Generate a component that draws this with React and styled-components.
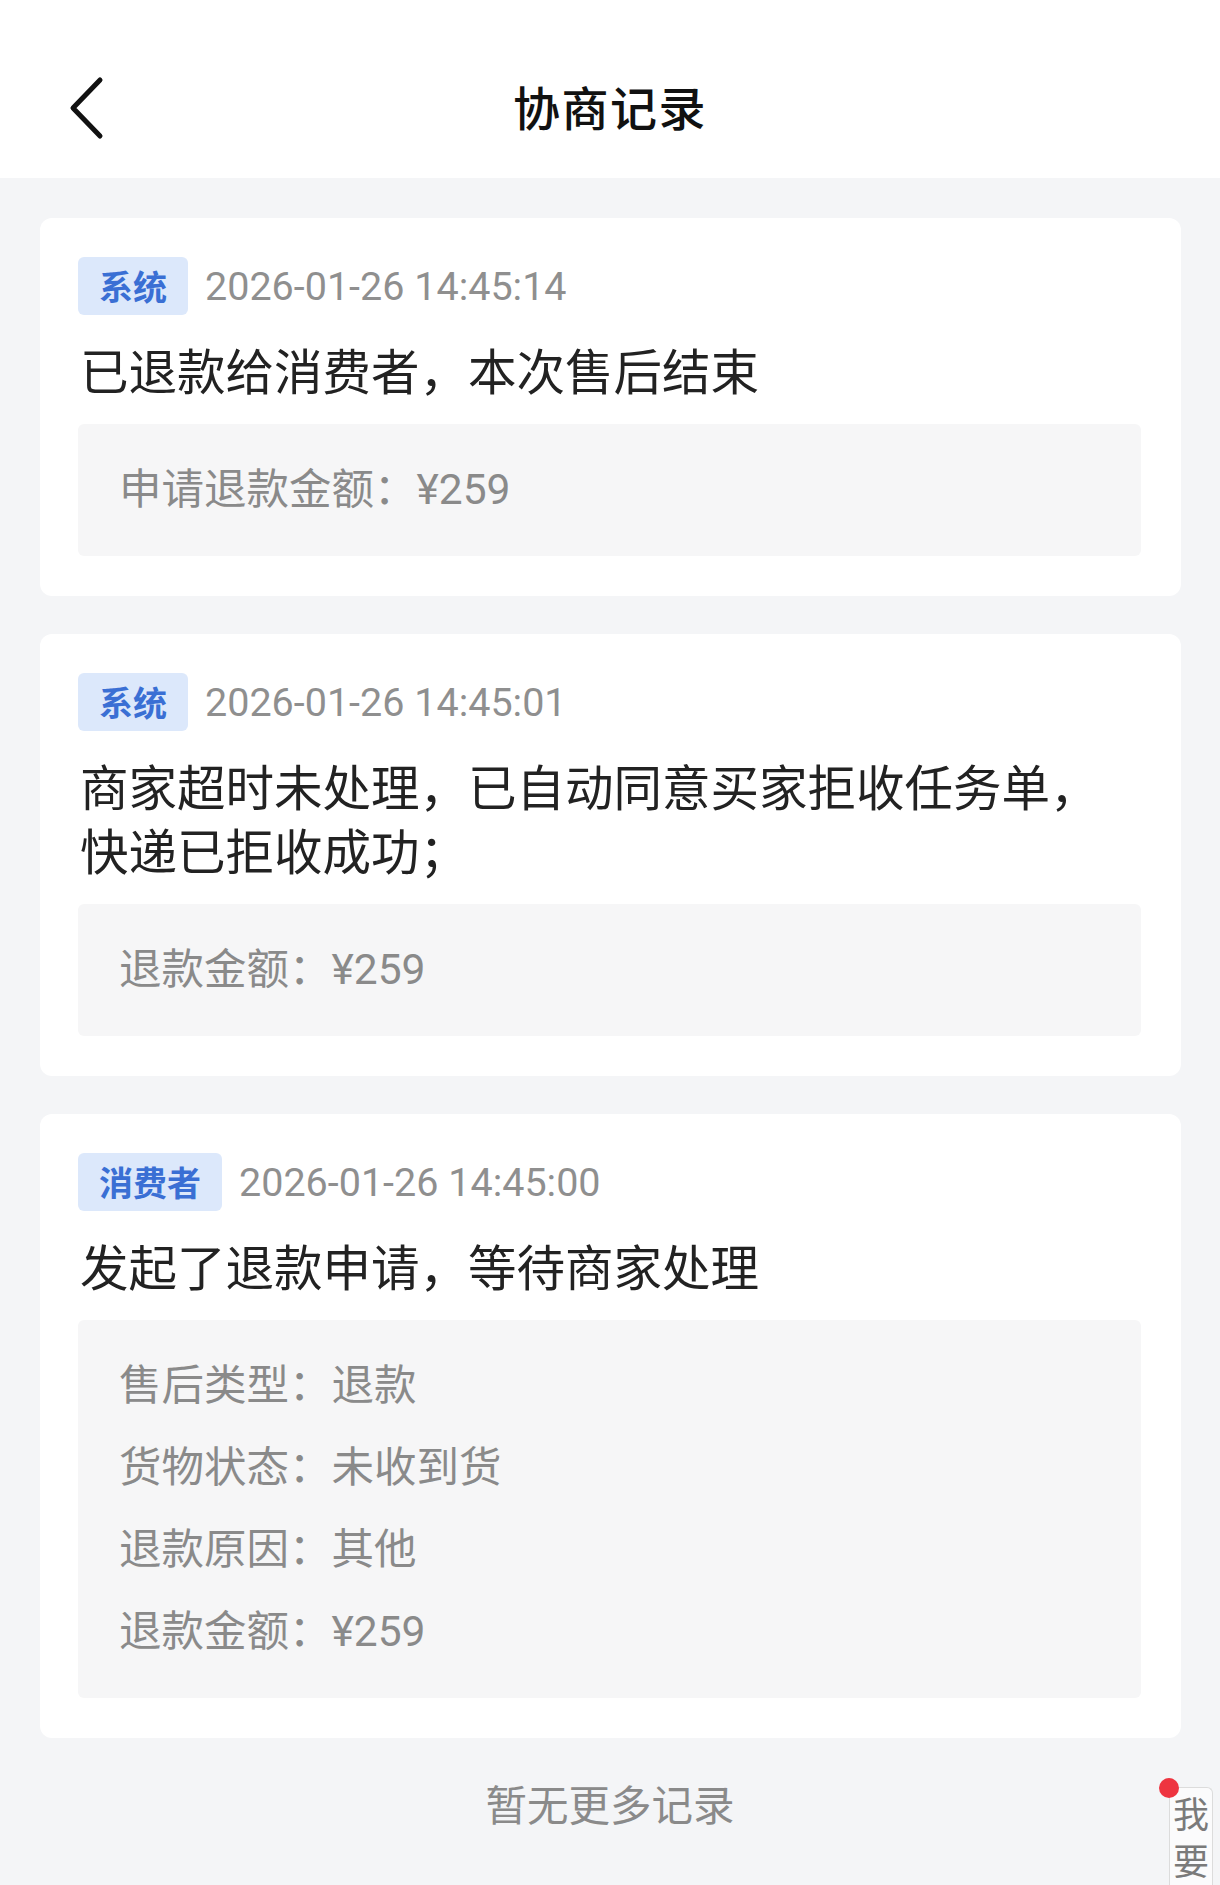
import React from "react";
import styled, { createGlobalStyle } from "styled-components";

const GlobalStyle = createGlobalStyle`
  html, body {
    margin: 0;
    padding: 0;
    background: #f4f5f7;
  }
  body {
    font-family: "Roboto", "Noto Sans CJK SC", sans-serif;
    -webkit-font-smoothing: antialiased;
  }
`;

const Page = styled.div`
  position: relative;
  width: 1220px;
  height: 1885px;
  overflow: hidden;
  background: #f4f5f7;
`;

const Header = styled.header`
  height: 178px;
  box-sizing: border-box;
  padding-top: 32px;
  background: #ffffff;
  display: grid;
  grid-template-columns: 1fr auto 1fr;
  align-items: center;
`;

const BackButton = styled.button`
  justify-self: start;
  margin-top: 6px;
  margin-left: 64px;
  width: 48px;
  height: 70px;
  padding: 0;
  border: none;
  background: transparent;
  display: flex;
  align-items: center;
  justify-content: center;
`;

const Title = styled.h1`
  margin: 0;
  font-family: "Noto Sans CJK SC", sans-serif;
  font-size: 47px;
  font-weight: 500;
  color: #111111;
  letter-spacing: 1.5px;
`;

const List = styled.main`
  display: flex;
  flex-direction: column;
  gap: 38px;
  padding: 40px 39px 0 40px;
`;

const Card = styled.section`
  background: #ffffff;
  border-radius: 12px;
  padding: 39px 40px 40px 38px;
`;

const MetaRow = styled.div`
  display: flex;
  align-items: center;
  gap: 17px;
`;

const Tag = styled.span`
  height: 58px;
  line-height: 58px;
  padding: 0 21px;
  border-radius: 6px;
  background: #dce8fb;
  color: #3a6fd4;
  font-family: "Noto Sans CJK SC", sans-serif;
  font-size: 34px;
  font-weight: 700;
`;

const Time = styled.span`
  font-family: "Roboto", sans-serif;
  font-size: 39.5px;
  color: #8f8f8f;
`;

const Message = styled.p`
  margin: 22px 0 0 2px;
  font-family: "Noto Sans CJK SC", sans-serif;
  font-size: 48.5px;
  line-height: 64px;
  color: #222222;
`;

const Detail = styled.div`
  margin-top: 23px;
  background: #f6f6f7;
  border-radius: 6px;
  padding: 25px 41px;
  display: flex;
  flex-direction: column;
`;

const DetailRow = styled.div`
  line-height: 82px;
  font-size: 42.5px;
  color: #8a8a8a;
  font-family: "Roboto", "Noto Sans CJK SC", sans-serif;
`;

const Footer = styled.div`
  margin-top: 35px;
  text-align: center;
  line-height: 60px;
  font-family: "Noto Sans CJK SC", sans-serif;
  font-size: 41.5px;
  color: #8a8a8a;
`;

const FloatTab = styled.div`
  position: absolute;
  top: 1787px;
  right: 7px;
  width: 44px;
  height: 140px;
  box-sizing: border-box;
  border: 1.5px solid #dcdcdc;
  border-bottom: none;
  border-radius: 6px 6px 0 0;
  background: #fbfbfc;
  display: flex;
  justify-content: center;
  padding-top: 8px;
`;

const TabText = styled.span`
  writing-mode: vertical-rl;
  font-family: "Noto Sans CJK SC", sans-serif;
  font-size: 36px;
  line-height: 40px;
  letter-spacing: 11px;
  color: #7a7a7a;
`;

const Dot = styled.span`
  position: absolute;
  left: -11px;
  top: -10px;
  width: 20px;
  height: 20px;
  border-radius: 50%;
  background: #ee3440;
`;

const records = [
  {
    role: "系统",
    time: "2026-01-26 14:45:14",
    message: ["已退款给消费者，本次售后结束"],
    details: ["申请退款金额：¥259"],
  },
  {
    role: "系统",
    time: "2026-01-26 14:45:01",
    message: ["商家超时未处理，已自动同意买家拒收任务单，", "快递已拒收成功；"],
    details: ["退款金额：¥259"],
  },
  {
    role: "消费者",
    time: "2026-01-26 14:45:00",
    message: ["发起了退款申请，等待商家处理"],
    details: [
      "售后类型：退款",
      "货物状态：未收到货",
      "退款原因：其他",
      "退款金额：¥259",
    ],
  },
];

function BackIcon() {
  return (
    <svg width="40" height="66" viewBox="0 0 40 66" fill="none">
      <path
        d="M32 5 L5 33 L32 61"
        stroke="#111111"
        strokeWidth="5"
        strokeLinecap="round"
        strokeLinejoin="round"
      />
    </svg>
  );
}

export default function App() {
  return (
    <>
      <GlobalStyle />
      <Page>
        <Header>
          <BackButton aria-label="返回">
            <BackIcon />
          </BackButton>
          <Title>协商记录</Title>
          <span />
        </Header>
        <List>
          {records.map((r, i) => (
            <Card key={i}>
              <MetaRow>
                <Tag>{r.role}</Tag>
                <Time>{r.time}</Time>
              </MetaRow>
              <Message>
                {r.message.map((line, j) => (
                  <React.Fragment key={j}>
                    {j > 0 && <br />}
                    {line}
                  </React.Fragment>
                ))}
              </Message>
              <Detail>
                {r.details.map((d, j) => (
                  <DetailRow key={j}>{d}</DetailRow>
                ))}
              </Detail>
            </Card>
          ))}
        </List>
        <Footer>暂无更多记录</Footer>
        <FloatTab>
          <Dot />
          <TabText>我要</TabText>
        </FloatTab>
      </Page>
    </>
  );
}
